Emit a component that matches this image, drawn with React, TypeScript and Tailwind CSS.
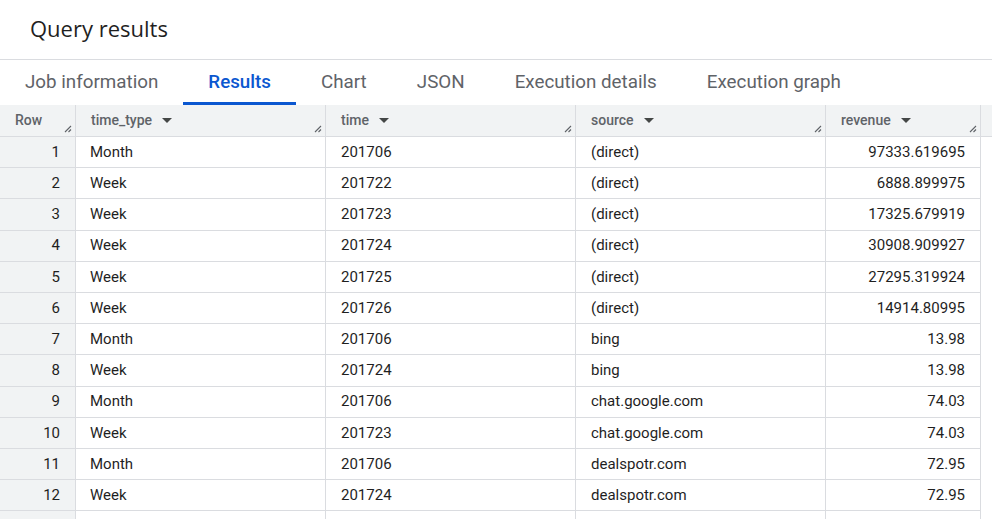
import React from 'react';

const tabs = ['Job information', 'Results', 'Chart', 'JSON', 'Execution details', 'Execution graph'];

const rows: [string, string, string, string][] = [
  ['Month', '201706', '(direct)', '97333.619695'],
  ['Week', '201722', '(direct)', '6888.899975'],
  ['Week', '201723', '(direct)', '17325.679919'],
  ['Week', '201724', '(direct)', '30908.909927'],
  ['Week', '201725', '(direct)', '27295.319924'],
  ['Week', '201726', '(direct)', '14914.80995'],
  ['Month', '201706', 'bing', '13.98'],
  ['Week', '201724', 'bing', '13.98'],
  ['Month', '201706', 'chat.google.com', '74.03'],
  ['Week', '201723', 'chat.google.com', '74.03'],
  ['Month', '201706', 'dealspotr.com', '72.95'],
  ['Week', '201724', 'dealspotr.com', '72.95'],
];

const SortArrow = () => (
  <svg width="10" height="6" viewBox="0 0 10 6" className="ml-[10px] mt-[1px]">
    <path d="M0 0 L10 0 L5 5 Z" fill="#444746" />
  </svg>
);

const Resize = () => (
  <svg width="8" height="8" viewBox="0 0 8 8" className="absolute right-[3px] bottom-[3px]">
    <path d="M7 1 L1 7 M7 4.5 L4.5 7" stroke="#5f6368" strokeWidth="1.1" />
  </svg>
);

function HeaderCell({ label, w, sort = true }: { label: string; w: string; sort?: boolean }) {
  return (
    <div className={`relative ${w} h-full border-r border-[#dadce0] flex items-center pl-[15px] pb-[1px]`}>
      <span className="text-[14px] font-medium text-[#5f6368]">{label}</span>
      {sort && <SortArrow />}
      <Resize />
    </div>
  );
}

export default function App() {
  return (
    <div className="w-[992px] h-[519px] overflow-hidden bg-white" style={{ fontFamily: 'Roboto, "Liberation Sans", sans-serif' }}>
      {/* Title */}
      <div className="h-[60px] border-b border-[#dadce0] flex items-center pl-[30px] pb-[2px]">
        <h1 className="text-[22px] text-[#1f1f1f] font-normal" style={{ fontFamily: '"Open Sans", Roboto, sans-serif' }}>Query results</h1>
      </div>

      {/* Tabs */}
      <div className="h-[45px] flex">
        {tabs.map(t => {
          const active = t === 'Results';
          return (
            <div
              key={t}
              className={`h-full px-[25px] pt-[2px] flex items-center border-b-[3px] ${active ? 'border-[#0b57d0] text-[#0b57d0] font-medium' : 'border-transparent text-[#5f6368]'} text-[18.8px]`}
            >
              {t}
            </div>
          );
        })}
      </div>

      {/* Table */}
      <div className="flex flex-col">
        <div className="h-[32px] flex bg-[#f1f3f4] border-b border-[#dadce0]">
          <HeaderCell label="Row" w="w-[76px]" sort={false} />
          <HeaderCell label="time_type" w="w-[250px]" />
          <HeaderCell label="time" w="w-[250px]" />
          <HeaderCell label="source" w="w-[250px]" />
          <HeaderCell label="revenue" w="w-[155px]" />
        </div>
        {[...rows, ['', '', '', ''] as [string, string, string, string]].map((r, i) => (
          <div key={i} className="h-[31.2px] flex shrink-0 text-[15px] text-[#1f1f1f]">
            <div className="w-[76px] shrink-0 bg-[#f1f3f4] border-r border-b border-[#dadce0] flex items-center justify-end pr-[15px]">
              {r[0] ? i + 1 : ''}
            </div>
            <div className="w-[250px] shrink-0 border-r border-b border-[#dadce0] flex items-center pl-[14px]">{r[0]}</div>
            <div className="w-[250px] shrink-0 border-r border-b border-[#dadce0] flex items-center pl-[15px]">{r[1]}</div>
            <div className="w-[250px] shrink-0 border-r border-b border-[#dadce0] flex items-center pl-[15px]">{r[2]}</div>
            <div className="w-[155px] shrink-0 border-r border-b border-[#dadce0] flex items-center justify-end pr-[15px]">{r[3]}</div>
          </div>
        ))}
      </div>
    </div>
  );
}
